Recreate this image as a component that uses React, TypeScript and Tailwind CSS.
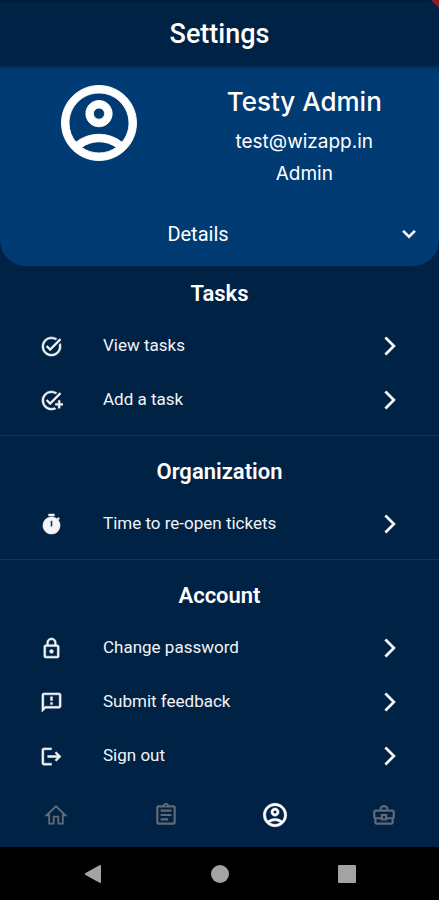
import { useState } from 'react';
import type { ComponentType } from 'react';
import {
  MdAddTask,
  MdArrowForwardIos,
  MdExpandMore,
  MdLockOutline,
  MdLogout,
  MdOutlineAccountCircle,
  MdOutlineAssignment,
  MdOutlineBusinessCenter,
  MdOutlineFeedback,
  MdTaskAlt,
  MdTimer,
} from 'react-icons/md';

type Icon = ComponentType<{ className?: string }>;

interface SettingsItem {
  label: string;
  icon: Icon;
}

interface SettingsSection {
  title: string;
  items: SettingsItem[];
}

// Thickens the drawn paths only, the Material bounding box has fill="none"
const BOLD = '[&_path:not([fill=none])]:stroke-[0.5]';

function HomeIcon({ className }: { className?: string }) {
  return (
    <svg className={className} viewBox="0 0 26 26" aria-hidden="true">
      <path
        d="M2.600 13.300L12 4.300l9.400 9h-2.600v8.300h-4.500v-7H9.700v7H5.200v-8.300z"
        fill="none"
        stroke="currentColor"
        strokeWidth="1.900"
      />
    </svg>
  );
}

const sections: SettingsSection[] = [
  {
    title: 'Tasks',
    items: [
      { label: 'View tasks', icon: MdTaskAlt },
      { label: 'Add a task', icon: MdAddTask },
    ],
  },
  {
    title: 'Organization',
    items: [{ label: 'Time to re-open tickets', icon: MdTimer }],
  },
  {
    title: 'Account',
    items: [
      { label: 'Change password', icon: MdLockOutline },
      { label: 'Submit feedback', icon: MdOutlineFeedback },
      { label: 'Sign out', icon: MdLogout },
    ],
  },
];

const tabs: { id: string; label: string; icon: Icon }[] = [
  { id: 'home', label: 'Home', icon: HomeIcon },
  { id: 'tickets', label: 'Tickets', icon: MdOutlineAssignment },
  { id: 'profile', label: 'Profile', icon: MdOutlineAccountCircle },
  { id: 'business', label: 'Business', icon: MdOutlineBusinessCenter },
];

function ProfileCard() {
  const [open, setOpen] = useState(false);

  return (
    <section className="rounded-b-[26px] bg-[#003b73]">
      <div className="grid grid-cols-[45%_55%] pt-3">
        <div className="flex justify-center">
          <MdOutlineAccountCircle className="h-[90px] w-[90px] [&_path:not([fill=none])]:stroke-[0.25]" />
        </div>
        <div className="flex flex-col items-center pr-7 pt-1 font-['Inter',sans-serif]">
          <h2 className="text-[26px] font-medium leading-10">Testy Admin</h2>
          <p className="pt-1 text-[19px] leading-8">test@wizapp.in</p>
          <p className="text-[19px] leading-8">Admin</p>
        </div>
      </div>
      <button
        onClick={() => setOpen(!open)}
        aria-expanded={open}
        className="mt-3 flex h-16 w-full items-center pr-[17px]"
      >
        <span className="flex-1 text-center text-xl">Details</span>
        <MdExpandMore className={`h-[26px] w-[26px] ${BOLD} ${open ? 'rotate-180' : ''}`} />
      </button>
    </section>
  );
}

function SettingsRow({ label, icon: Icon }: SettingsItem) {
  return (
    <li>
      <button className="flex h-[54px] w-full items-center pl-10 pr-[38px] text-left">
        <Icon className={`h-[23px] w-[23px] text-gray-100 ${BOLD}`} />
        <span className="flex-1 pl-10 text-[17px] text-gray-100">{label}</span>
        <MdArrowForwardIos className={`h-[22px] w-[22px] ${BOLD}`} />
      </button>
    </li>
  );
}

export default function App() {
  const [activeTab, setActiveTab] = useState('profile');

  return (
    <div className="flex min-h-screen flex-col bg-[#002244] font-['Roboto',sans-serif] text-white">
      <header className="relative z-10 flex h-[66px] items-center justify-center border-t-2 border-[#001a35] bg-[#002244] shadow-[0_1px_4px_rgba(0,0,0,0.4)]">
        <h1 className="text-[27px] font-medium">Settings</h1>
        {/* corner of the debug ribbon */}
        <svg className="absolute -top-0.5 right-0 h-2 w-2" viewBox="0 0 8 8" aria-hidden="true">
          <path d="M0 0h8v8z" fill="#8f1a22" />
        </svg>
      </header>

      <main className="flex-1">
        <ProfileCard />
        {sections.map((section) => (
          <section
            key={section.title}
            className="border-b border-[#04386c] py-2 last:border-0 last:pb-0 nth-2:pt-0"
          >
            <h2 className="pt-0.5 text-center text-[22px] font-semibold leading-[51px]">
              {section.title}
            </h2>
            <ul>
              {section.items.map((item) => (
                <SettingsRow key={item.label} {...item} />
              ))}
            </ul>
          </section>
        ))}
      </main>

      <nav className="grid h-16 grid-cols-4 pl-0.5">
        {tabs.map(({ id, label, icon: Icon }) => (
          <button
            key={id}
            aria-label={label}
            onClick={() => setActiveTab(id)}
            className={`flex items-center justify-center ${
              activeTab === id ? 'text-white' : 'text-[#626a75]'
            }`}
          >
            <Icon className={activeTab === id ? `h-7 w-7 ${BOLD}` : 'h-[26px] w-[26px]'} />
          </button>
        ))}
      </nav>

      {/* Android system buttons */}
      <div className="flex h-[53px] items-center justify-center gap-[109px] bg-black text-[#a3a3a3]">
        <button aria-label="Back">
          <svg className="h-[18px] w-[18px]" viewBox="0 0 18 18" fill="currentColor">
            <path d="M16 0q1 0 1 1v16q0 1-1 1L1.500 10q-1.500-1 0-2z" />
          </svg>
        </button>
        <button aria-label="Home screen" className="h-[18px] w-[18px] rounded-full bg-[#a3a3a3]" />
        <button aria-label="Recent apps" className="h-[18px] w-[18px] rounded-[1px] bg-[#a3a3a3]" />
      </div>
    </div>
  );
}
